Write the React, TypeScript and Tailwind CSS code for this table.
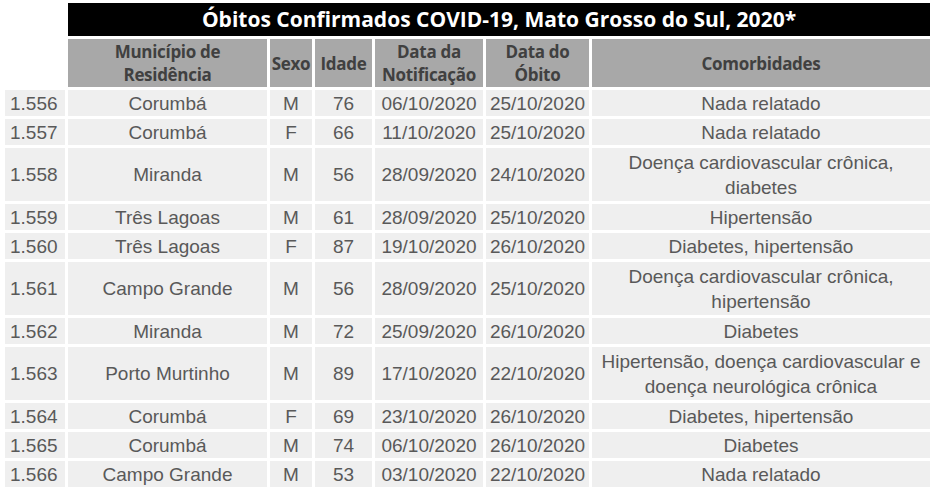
const rows = [
  {n: "1.556", mun: "Corumbá", sexo: "M", idade: "76", notif: "06/10/2020", obito: "25/10/2020", com: ["Nada relatado"]},
  {n: "1.557", mun: "Corumbá", sexo: "F", idade: "66", notif: "11/10/2020", obito: "25/10/2020", com: ["Nada relatado"]},
  {n: "1.558", mun: "Miranda", sexo: "M", idade: "56", notif: "28/09/2020", obito: "24/10/2020", com: ["Doença cardiovascular crônica,", "diabetes"]},
  {n: "1.559", mun: "Três Lagoas", sexo: "M", idade: "61", notif: "28/09/2020", obito: "25/10/2020", com: ["Hipertensão"]},
  {n: "1.560", mun: "Três Lagoas", sexo: "F", idade: "87", notif: "19/10/2020", obito: "26/10/2020", com: ["Diabetes, hipertensão"]},
  {n: "1.561", mun: "Campo Grande", sexo: "M", idade: "56", notif: "28/09/2020", obito: "25/10/2020", com: ["Doença cardiovascular crônica,", "hipertensão"]},
  {n: "1.562", mun: "Miranda", sexo: "M", idade: "72", notif: "25/09/2020", obito: "26/10/2020", com: ["Diabetes"]},
  {n: "1.563", mun: "Porto Murtinho", sexo: "M", idade: "89", notif: "17/10/2020", obito: "22/10/2020", com: ["Hipertensão, doença cardiovascular e", "doença neurológica crônica"]},
  {n: "1.564", mun: "Corumbá", sexo: "F", idade: "69", notif: "23/10/2020", obito: "26/10/2020", com: ["Diabetes, hipertensão"]},
  {n: "1.565", mun: "Corumbá", sexo: "M", idade: "74", notif: "06/10/2020", obito: "26/10/2020", com: ["Diabetes"]},
  {n: "1.566", mun: "Campo Grande", sexo: "M", idade: "53", notif: "03/10/2020", obito: "22/10/2020", com: ["Nada relatado"]},
];

const cell = "bg-[#efefef] flex items-center justify-center text-center whitespace-nowrap";

export default function App() {
  return (
    <div className="w-[934px] h-[493px] bg-white pt-[3px] pl-[5px]">
      <div
        className="grid grid-cols-[60px_199px_42px_57px_108px_103px_338px] gap-[3px] text-[#595959] text-[19px] leading-[25px]"
        style={{fontFamily: '"Liberation Sans", Arial, sans-serif'}}
      >
        {/* title */}
        <div></div>
        <div
          className="col-span-6 h-[33px] bg-black text-white font-bold text-[21px] flex items-center justify-center"
          style={{fontFamily: '"Open Sans", sans-serif'}}
        >
          Óbitos Confirmados COVID-19, Mato Grosso do Sul, 2020*
        </div>

        {/* header */}
        <div></div>
        {["Município de\nResidência", "Sexo", "Idade", "Data da\nNotificação", "Data do\nÓbito", "Comorbidades"].map((h) => (
          <div
            key={h}
            className="h-[48px] bg-[#a8a8a8] text-[#404040] font-bold text-[17px] leading-[23px] flex items-center justify-center text-center whitespace-pre-line tracking-[-0.3px]"
            style={{fontFamily: '"Open Sans", sans-serif'}}
          >
            {h}
          </div>
        ))}

        {rows.map((r) => {
          const h = r.com.length > 1 ? "h-[53px]" : "h-[26px]";
          return [
            <div key={r.n + "n"} className={`${h} bg-[#efefef] flex items-center pl-[5px]`}>{r.n}</div>,
            <div key={r.n + "m"} className={`${h} ${cell}`}>{r.mun}</div>,
            <div key={r.n + "s"} className={`${h} ${cell}`}>{r.sexo}</div>,
            <div key={r.n + "i"} className={`${h} ${cell}`}>{r.idade}</div>,
            <div key={r.n + "d"} className={`${h} ${cell}`}>{r.notif}</div>,
            <div key={r.n + "o"} className={`${h} ${cell}`}>{r.obito}</div>,
            <div key={r.n + "c"} className={`${h} ${cell} flex-col`}>
              {r.com.map((c) => (
                <div key={c}>{c}</div>
              ))}
            </div>,
          ];
        })}
      </div>
    </div>
  );
}
